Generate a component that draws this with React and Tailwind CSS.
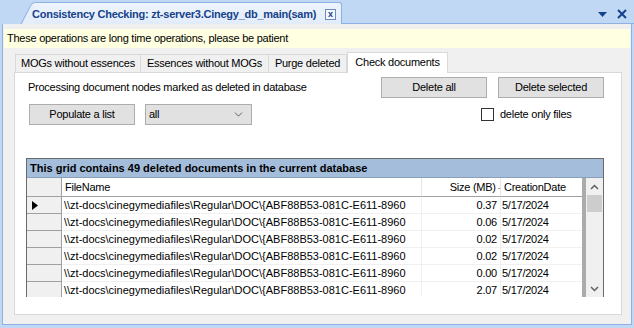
import { ChevronDown } from "lucide-react";

const ROWS = [
  { size: "0.37", date: "5/17/2024", current: true },
  { size: "0.06", date: "5/17/2024" },
  { size: "0.02", date: "5/17/2024" },
  { size: "0.02", date: "5/17/2024" },
  { size: "0.00", date: "5/17/2024" },
  { size: "2.07", date: "5/17/2024" },
];

const PATH = "\\\\zt-docs\\cinegymediafiles\\Regular\\DOC\\{ABF88B53-081C-E611-8960";

const TABS = [
  { label: "MOGs without essences", w: "w-[126px]" },
  { label: "Essences without MOGs", w: "w-[128px]" },
  { label: "Purge deleted", w: "w-[78px]" },
];

function WinButton({ children, className = "" }) {
  return (
    <button
      className={
        "h-[21px] w-[106px] bg-[#e1e1e1] border border-[#adadad] text-black leading-none " +
        className
      }
    >
      {children}
    </button>
  );
}

export default function App() {
  return (
    <div
      className="w-[634px] h-[328px] bg-[#c1d8f5] flex flex-col overflow-hidden text-black text-[11px] tracking-[-0.25px]"
      style={{ fontFamily: '"Liberation Sans", Arial, sans-serif' }}
    >
      {/* document tab strip */}
      <div className="h-[24px] flex items-end shrink-0">
        <svg width="34" height="22" viewBox="0 0 34 22" className="block">
          <path d="M22 22 L31 3 Q32 1 34 1 L34 22 Z" fill="#e6eefa" />
          <path d="M21 22 L31 3 Q32 1 34 1" fill="none" stroke="#8db2e3" strokeWidth="1" />
        </svg>
        <div className="h-[22px] w-[308px] bg-gradient-to-b from-[#eef4fc] to-[#e2ecf9] border-t border-r border-[#8db2e3] rounded-tr-[3px] flex items-center">
          <span className="-ml-[2px] font-bold text-[#15428b] tracking-[-0.25px] whitespace-nowrap mt-[2px]">
            Consistency Checking: zt-server3.Cinegy_db_main(sam)
          </span>
          <span className="ml-auto mr-[5px] mt-[2px] w-[11px] h-[11px] border border-[#6c8cbf] bg-[#f4f7fc] flex items-center justify-center text-[9px] font-bold leading-none text-[#15428b] tracking-normal">
            x
          </span>
        </div>
        <div className="flex-1 h-[22px] border-b border-[#8db2e3] flex items-start justify-end pr-[7px] pt-[6px] gap-[10px]">
          <svg width="9" height="6" viewBox="0 0 9 6" className="mt-[4px]">
            <path d="M0 0 L9 0 L4.5 5 Z" fill="#15428b" />
          </svg>
          <svg width="10" height="10" viewBox="0 0 10 10" className="mt-[1px]">
            <path d="M1 1 L9 9 M9 1 L1 9" stroke="#15428b" strokeWidth="2" />
          </svg>
        </div>
      </div>

      {/* main panel */}
      <div className="ml-[2px] mr-[2px] h-[301px] bg-[#f0f0f0] border-l border-r border-b border-[#8db2e3] flex flex-col pt-[5px] px-[1px]">
        <div className="h-[19px] bg-[#ffffe1] flex items-center pl-[3px]">
          These operations are long time operations, please be patient
        </div>

        {/* tab headers */}
        <div className="mt-[4px] h-[20px] flex items-end pl-[11px]">
          {TABS.map((t, i) => (
            <div
              key={t.label}
              className={
                t.w +
                " h-[18px] border-t border-r border-[#d9d9d9] bg-[#f0f0f0] flex items-center justify-center whitespace-nowrap " +
                (i === 0 ? "border-l" : "")
              }
            >
              {t.label}
            </div>
          ))}
          <div className="w-[101px] h-[21px] -mb-[1px] bg-white border-t border-l border-r border-[#d9d9d9] flex items-center justify-center whitespace-nowrap relative z-10 pb-[2px]">
            Check documents
          </div>
        </div>

        {/* tab page */}
        <div className="ml-[10px] w-[608px] h-[243px] bg-white border border-[#d9d9d9] flex flex-col">
          <div className="mt-[4px] flex items-center">
            <span className="ml-[13px]">
              Processing document nodes marked as deleted in database
            </span>
            <div className="ml-auto mr-[17px] flex gap-[11px]">
              <WinButton>Delete all</WinButton>
              <WinButton>Delete selected</WinButton>
            </div>
          </div>

          <div className="mt-[6px] flex items-center h-[21px]">
            <WinButton className="ml-[14px]">Populate a list</WinButton>
            <div className="ml-[10px] h-[21px] w-[107px] bg-[#e1e1e1] border border-[#adadad] flex items-center pl-[3px] pr-[6px]">
              <span>all</span>
              <ChevronDown size={13} strokeWidth={1.5} className="ml-auto text-[#444]" />
            </div>
            <div className="ml-[229px] w-[13px] h-[13px] border border-[#333] bg-white" />
            <span className="ml-[6px]">delete only files</span>
          </div>

          {/* grid */}
          <div className="mt-[33px] ml-[11px] w-[578px] h-[139px] border-t border-l border-r border-[#6a6a6a] overflow-hidden flex flex-col">
            <div className="h-[19px] shrink-0 bg-[#a3bddb] border-b border-[#8a9fb8] flex items-center pl-[3px] font-bold tracking-normal whitespace-nowrap">
              This grid contains 49 deleted documents in the current database
            </div>
            <div className="flex flex-1 min-h-0">
              <div className="w-[555px] flex flex-col">
                <div className="h-[19px] shrink-0 flex">
                  <div className="w-[35px] bg-[#f0f0f0] border-r border-b border-[#a0a0a0]" />
                  <div className="w-[360px] bg-white border-r border-b border-[#e5e5e5] border-b-[#a0a0a0] flex items-center pl-[3px]">
                    FileName
                  </div>
                  <div className="w-[79px] bg-white border-r border-b border-[#e5e5e5] border-b-[#a0a0a0] flex items-center justify-end whitespace-nowrap">
                    Size (MB)<span className="ml-[2px] text-[9px]">.</span>
                  </div>
                  <div className="w-[81px] bg-white border-b border-[#a0a0a0] flex items-center pl-[3px]">
                    CreationDate
                  </div>
                </div>
                {ROWS.map((r, i) => (
                  <div key={i} className="h-[17px] shrink-0 flex">
                    <div className="w-[35px] bg-[#f0f0f0] border-r border-b border-[#a0a0a0] flex items-center pl-[5px]">
                      {r.current && (
                        <svg width="6" height="9" viewBox="0 0 6 9">
                          <path d="M0 0 L6 4.5 L0 9 Z" fill="#000" />
                        </svg>
                      )}
                    </div>
                    <div className="w-[360px] border-r border-b border-[#f0f0f0] flex items-center pl-[2px] whitespace-nowrap overflow-hidden tracking-normal">
                      {PATH}
                    </div>
                    <div className="w-[79px] border-r border-b border-[#f0f0f0] flex items-center justify-end pr-[3px]">
                      {r.size}
                    </div>
                    <div className="w-[81px] border-b border-[#f0f0f0] flex items-center pl-[1px]">
                      {r.date}
                    </div>
                  </div>
                ))}
              </div>
              <div className="w-[4px] bg-[#ababab]" />
              <div className="w-[17px] bg-[#f0f0f0] flex flex-col">
                <div className="h-[17px] flex items-center justify-center">
                  <svg width="9" height="6" viewBox="0 0 9 6">
                    <path d="M1 5 L4.5 1.5 L8 5" fill="none" stroke="#606060" strokeWidth="1.5" />
                  </svg>
                </div>
                <div className="mx-[1px] h-[17px] bg-[#cdcdcd]" />
                <div className="flex-1" />
                <div className="h-[17px] flex items-center justify-center">
                  <svg width="9" height="6" viewBox="0 0 9 6">
                    <path d="M1 1 L4.5 4.5 L8 1" fill="none" stroke="#606060" strokeWidth="1.5" />
                  </svg>
                </div>
              </div>
            </div>
          </div>
        </div>
      </div>
    </div>
  );
}
